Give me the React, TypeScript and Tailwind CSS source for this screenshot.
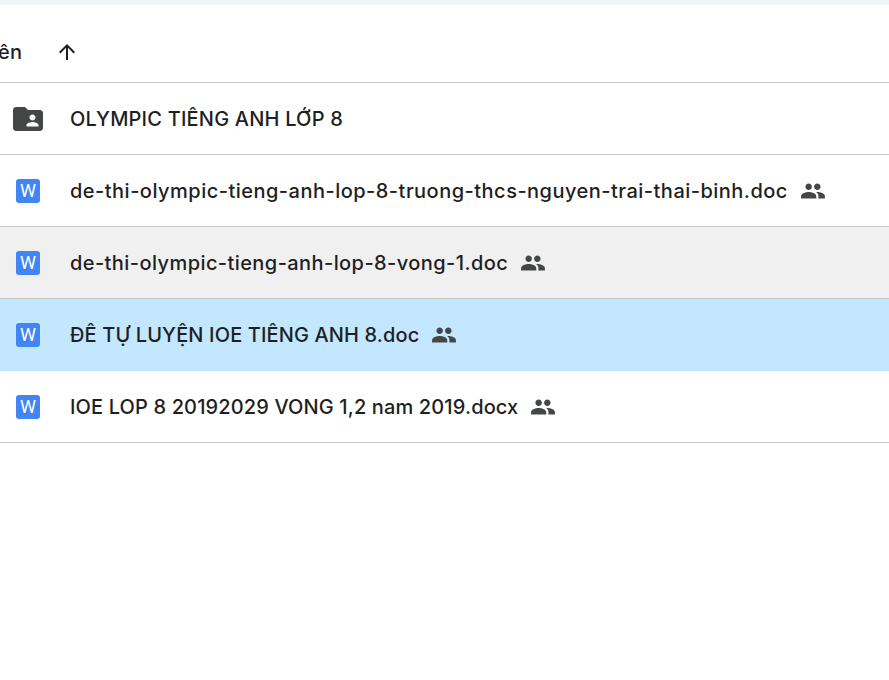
const PEOPLE =
  "M16 11c1.66 0 2.99-1.34 2.99-3S17.66 5 16 5c-1.66 0-3 1.34-3 3s1.34 3 3 3zm-8 0c1.66 0 2.99-1.34 2.99-3S9.66 5 8 5C6.34 5 5 6.34 5 8s1.34 3 3 3zm0 2c-2.33 0-7 1.17-7 3.5V19h14v-2.5c0-2.33-4.67-3.5-7-3.5zm8 0c-.29 0-.62.02-.97.05 1.16.84 1.97 1.97 1.97 3.45V19h6v-2.5c0-2.33-4.67-3.5-7-3.5z";

const FOLDER =
  "M20 6h-8l-2-2H4c-1.1 0-2 .9-2 2v12c0 1.1.9 2 2 2h16c1.1 0 2-.9 2-2V8c0-1.1-.9-2-2-2zm-5 3c1.1 0 2 .9 2 2s-.9 2-2 2-2-.9-2-2 .9-2 2-2zm4 8h-8v-1c0-1.33 2.67-2 4-2s4 .67 4 2v1z";

function WordIcon() {
  return (
    <div className="ml-4 flex h-6 w-6 shrink-0 items-center justify-center rounded-[3px] bg-[#4285f4] font-['Roboto',sans-serif] text-[18px] font-normal leading-none tracking-normal text-white">
      W
    </div>
  );
}

function FolderIcon() {
  return (
    <svg viewBox="0 0 24 24" className="ml-2.5 h-9 w-9 shrink-0 -mr-1.5 fill-[#444746]">
      <path d={FOLDER} />
    </svg>
  );
}

const rowBase = "flex h-[72px] items-center border-b border-[#c7c7c7]";

function Row({
  name,
  folder,
  shared = true,
  className = "",
}: {
  name: string;
  folder?: boolean;
  shared?: boolean;
  className?: string;
}) {
  return (
    <div className={`${rowBase} ${className}`}>
      {folder ? <FolderIcon /> : <WordIcon />}
      <span className="ml-[30px] whitespace-nowrap text-[#1f1f1f]">{name}</span>
      {shared && (
        <svg viewBox="0 0 24 24" className="ml-3 h-[26px] w-[26px] shrink-0 fill-[#444746]">
          <path d={PEOPLE} />
        </svg>
      )}
    </div>
  );
}

export default function App() {
  return (
    <div className="h-[680px] w-[889px] overflow-hidden bg-white font-['Inter',sans-serif] text-[20px] font-[450] tracking-[0.2px]">
      <div className="h-[5px] bg-[#f0f4f9]" />
      <div className={`${rowBase} h-[78px] pt-[16px]`}>
        <span className="-ml-0.5 whitespace-nowrap text-[#1f1f1f]">ên</span>
        <svg viewBox="0 0 24 24" className="ml-[33px] h-6 w-6 fill-[#1f1f1f]">
          <path d="M4 12l1.41 1.41L11 7.83V20h2V7.83l5.58 5.59L20 12l-8-8-8 8z" />
        </svg>
      </div>
      <Row name="OLYMPIC TIÊNG ANH LỚP 8" folder shared={false} />
      <Row
        name="de-thi-olympic-tieng-anh-lop-8-truong-thcs-nguyen-trai-thai-binh.doc"
        className="tracking-[0.48px]"
      />
      <Row
        name="de-thi-olympic-tieng-anh-lop-8-vong-1.doc"
        className="bg-[#f0f0f0] tracking-[0.42px]"
      />
      <Row
        name="ĐÊ TỰ LUYỆN IOE TIÊNG ANH 8.doc"
        className="border-b-0 bg-[#c2e7ff] tracking-[0.13px]"
      />
      <Row name="IOE LOP 8 20192029 VONG 1,2 nam 2019.docx" className="tracking-[0.13px]" />
    </div>
  );
}
